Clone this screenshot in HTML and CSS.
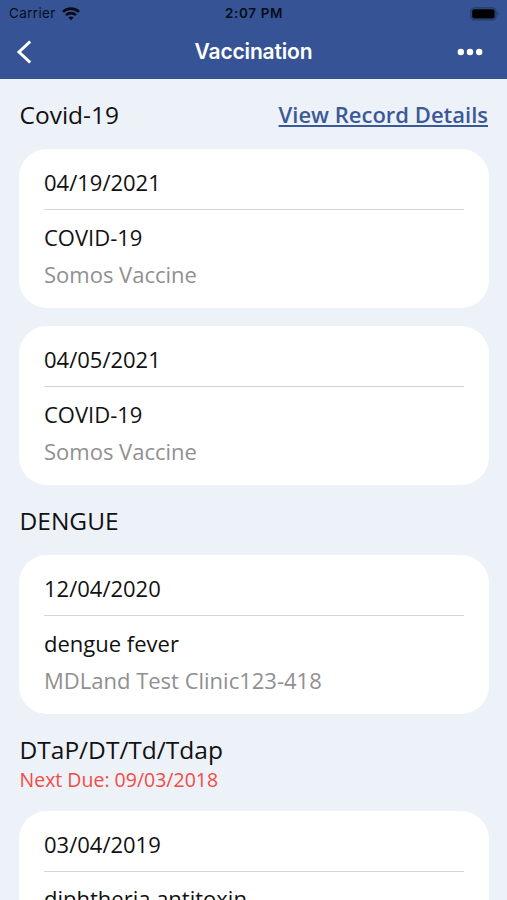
FILE: index.html
```html
<!DOCTYPE html>
<html lang="en">
<head>
<meta charset="utf-8">
<title>Vaccination</title>
<link rel="stylesheet" href="styles.css">
</head>
<body>
<header class="top">
  <div class="status">
    <div class="carrier"><span>Carrier</span>
      <svg width="18" height="14" viewBox="0 0 18 14"><path d="M9 13.200 6.400 10.600a3.800 3.800 0 0 1 5.200 0z" fill="#080b14"/><path d="M4 8.100a7.400 7.400 0 0 1 10 0M1 4.900a11.400 11.400 0 0 1 16 0" fill="none" stroke="#080b14" stroke-width="2.600"/></svg>
    </div>
    <div class="clock">2:07 PM</div>
    <div class="battery"><svg width="29" height="14" viewBox="0 0 29 14"><rect x=".9" y=".9" width="25" height="12" rx="3.600" fill="none" stroke="#213c68" stroke-width="1.400"/><rect x="2.200" y="2.300" width="22.400" height="9.200" rx="2" fill="#000"/><path d="M27.300 5c1.700.6 1.700 3.200 0 3.800z" fill="#213c68"/></svg></div>
  </div>
  <nav class="nav">
    <svg class="back" width="16" height="26" viewBox="0 0 16 26"><path d="M14.200 2.500 3 13l11.200 10.500" fill="none" stroke="#fff" stroke-width="3"/></svg>
    <h1>Vaccination</h1>
    <svg class="more" width="26" height="8" viewBox="0 0 26 8" fill="#fff"><circle cx="3.800" cy="4" r="3.200"/><circle cx="13" cy="4" r="3.200"/><circle cx="22.200" cy="4" r="3.200"/></svg>
  </nav>
</header>
<main>
  <section>
    <div class="heading"><h2>Covid-19</h2><a href="#">View Record Details</a></div>
    <article class="card"><div class="date">04/19/2021</div><div class="name">COVID-19</div><div class="place">Somos Vaccine</div></article>
    <article class="card"><div class="date">04/05/2021</div><div class="name">COVID-19</div><div class="place">Somos Vaccine</div></article>
  </section>
  <section>
    <div class="heading"><h2>DENGUE</h2></div>
    <article class="card"><div class="date">12/04/2020</div><div class="name">dengue fever</div><div class="place">MDLand Test Clinic123-418</div></article>
  </section>
  <section>
    <div class="heading"><h2>DTaP/DT/Td/Tdap</h2></div>
    <p class="due">Next Due: 09/03/2018</p>
    <article class="card last"><div class="date">03/04/2019</div><div class="name">diphtheria antitoxin</div></article>
  </section>
</main>
</body>
</html>
```
FILE: styles.css
```css
* { box-sizing: border-box; margin: 0; padding: 0; }
html, body { height: 900px; overflow: hidden; }
body { background: #edf2f9; color: #111; font-family: "Open Sans", sans-serif; }
svg { display: block; }
.top { height: 79px; background: #365495; }
.status { height: 27px; display: grid; grid-template-columns: 1fr auto 1fr; align-items: center; padding: 0 8px 0 9px; font: 13.5px/27px Inter, sans-serif; color: #080c18; }
.carrier { display: flex; align-items: center; gap: 6px; letter-spacing: .35px; }
.clock { font-weight: 600; letter-spacing: .65px; }
.battery { justify-self: end; }
.nav { height: 50px; display: grid; grid-template-columns: 1fr auto 1fr; align-items: center; padding: 0 24px; color: #fff; }
.nav h1 { font: 600 21px/50px Inter, sans-serif; letter-spacing: -.15px; }
.back { margin-left: -8px; }
.more { justify-self: end; }
main { padding: 0 18.500px 0 19px; }
.heading { height: 70px; padding: 2px .5px 0; display: flex; align-items: center; justify-content: space-between; }
h2 { font-size: 24.500px; font-weight: 400; line-height: 34px; }
a { font-size: 22px; font-weight: 600; line-height: 30px; margin-top: -2px; color: #3b5998; text-underline-offset: 2px; text-decoration-thickness: 1.500px; }
.card { height: 159px; background: #fff; border-radius: 28px; padding: 7px 24.500px 0 25px; }
.card + .card { margin-top: 18px; }
.card.last { height: 89px; border-radius: 28px 28px 0 0; overflow: hidden; }
.date, .name, .place { font-size: 22px; white-space: nowrap; }
.date { height: 54px; line-height: 53px; border-bottom: 1px solid #d5d5d5; }
.name { height: 38px; line-height: 38px; margin-top: 8px; }
.last .name { margin-top: 7px; }
.place { height: 38px; line-height: 38px; color: #909090; margin-top: -1px; }
.due { font-size: 19.500px; line-height: 28px; color: #f34b43; margin: -18px .5px 17px; }
```
